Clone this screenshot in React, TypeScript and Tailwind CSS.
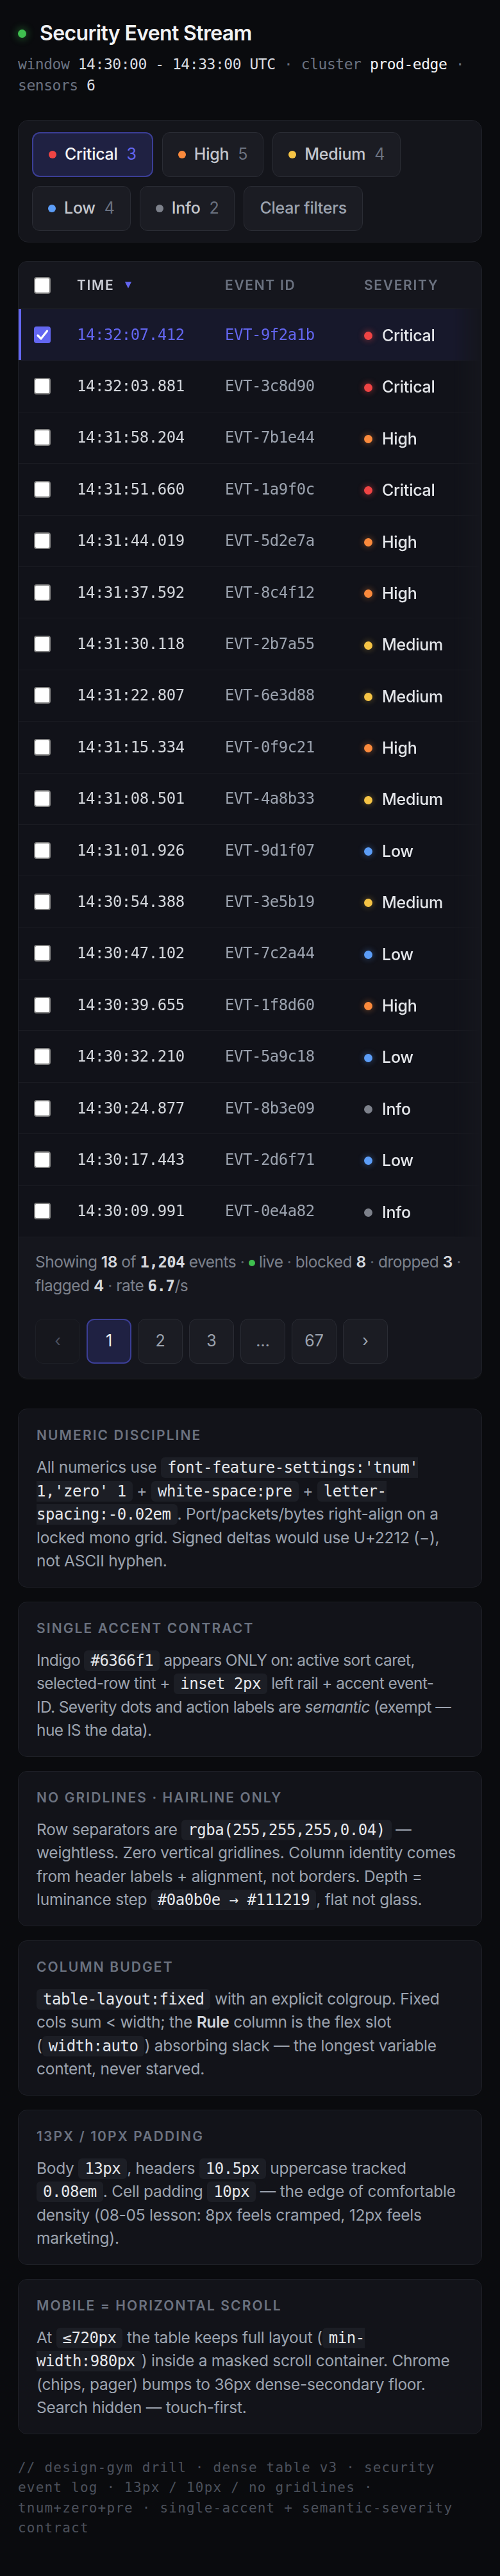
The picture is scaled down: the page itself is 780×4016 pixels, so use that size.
import React from "react";

type Sev = "Critical" | "High" | "Medium" | "Low" | "Info";

const MONO = "[font-family:'DejaVu_Sans_Mono','Liberation_Mono',monospace]";

const DOT: Record<Sev, string> = {
  Critical: "bg-[#ef4444] shadow-[0_0_9px_2px_rgba(239,68,68,0.35)]",
  High: "bg-[#fb8a3c] shadow-[0_0_9px_2px_rgba(251,138,60,0.28)]",
  Medium: "bg-[#f6c445] shadow-[0_0_9px_2px_rgba(246,196,69,0.22)]",
  Low: "bg-[#5c9df7] shadow-[0_0_9px_2px_rgba(92,157,247,0.25)]",
  Info: "bg-[#7d818b]",
};

const CHIP_DOT: Record<Sev, string> = {
  Critical: "bg-[#ef4444]",
  High: "bg-[#fb8a3c]",
  Medium: "bg-[#f6c445]",
  Low: "bg-[#5c9df7]",
  Info: "bg-[#7d818b]",
};

const ROWS: [string, string, Sev][] = [
  ["14:32:07.412", "EVT-9f2a1b", "Critical"],
  ["14:32:03.881", "EVT-3c8d90", "Critical"],
  ["14:31:58.204", "EVT-7b1e44", "High"],
  ["14:31:51.660", "EVT-1a9f0c", "Critical"],
  ["14:31:44.019", "EVT-5d2e7a", "High"],
  ["14:31:37.592", "EVT-8c4f12", "High"],
  ["14:31:30.118", "EVT-2b7a55", "Medium"],
  ["14:31:22.807", "EVT-6e3d88", "Medium"],
  ["14:31:15.334", "EVT-0f9c21", "High"],
  ["14:31:08.501", "EVT-4a8b33", "Medium"],
  ["14:31:01.926", "EVT-9d1f07", "Low"],
  ["14:30:54.388", "EVT-3e5b19", "Medium"],
  ["14:30:47.102", "EVT-7c2a44", "Low"],
  ["14:30:39.655", "EVT-1f8d60", "High"],
  ["14:30:32.210", "EVT-5a9c18", "Low"],
  ["14:30:24.877", "EVT-8b3e09", "Info"],
  ["14:30:17.443", "EVT-2d6f71", "Low"],
  ["14:30:09.991", "EVT-0e4a82", "Info"],
];

function Box({ checked }: { checked?: boolean }) {
  if (checked) {
    return (
      <span className="flex h-[26px] w-[26px] items-center justify-center rounded-[4px] bg-[#6366f1]">
        <svg viewBox="0 0 24 24" className="h-[24px] w-[24px]">
          <path
            d="M5 13 L10 18 L19.5 6"
            fill="none"
            stroke="#ffffff"
            strokeWidth="3.2"
            strokeLinecap="round"
            strokeLinejoin="round"
          />
        </svg>
      </span>
    );
  }
  return <span className="block h-[26px] w-[26px] rounded-[4px] border-2 border-[#808080] bg-white" />;
}

function Chip({
  sev,
  label,
  count,
  active,
}: {
  sev?: Sev;
  label: string;
  count?: number;
  active?: boolean;
}) {
  return (
    <div
      className={`flex h-[70px] items-center gap-[13px] rounded-[12px] px-[24px] text-[25px] tracking-[-0.01em] ${
        active
          ? "border-2 border-[#3b3e96] bg-[#1f2142]"
          : "border border-[#2a2c34] bg-[#1b1c23]"
      }`}
    >
      {sev && <span className={`h-[12px] w-[12px] rounded-full ${CHIP_DOT[sev]}`} />}
      <span className={`font-medium ${active ? "text-[#f3f4f6]" : sev ? "text-[#c4c7ce]" : "text-[#9ca3af]"}`}>
        {label}
      </span>
      {count !== undefined && (
        <span className={`ml-[1px] ${active ? "text-[#6366f1]" : "text-[#6b7280]"}`}>{count}</span>
      )}
    </div>
  );
}

function C({ children }: { children: React.ReactNode }) {
  return (
    <code
      className={`${MONO} rounded-[6px] bg-[#1c1e25] px-[10px] py-[2px] text-[24px] leading-[1] tracking-[-0.02em] text-[#e5e7eb]`}
    >
      {children}
    </code>
  );
}

function Note({
  title,
  children,
  first,
  tight,
}: {
  title: string;
  children: React.ReactNode;
  first?: boolean;
  tight?: boolean;
}) {
  return (
    <section
      className={`${first ? "mt-[47px]" : "mt-[22px]"} rounded-[14px] border border-[#1e2027] bg-[#121319] px-[28px] pb-[22px] pt-[27px]`}
    >
      <h3 className="text-[21px] font-semibold uppercase leading-[28px] tracking-[0.1em] text-[#6b7280]">{title}</h3>
      <p
        className={`mt-[17px] text-[24.5px] leading-[36.5px] text-[#9ca3af] ${
          tight ? "tracking-[-0.6px]" : "tracking-[-0.25px]"
        }`}
      >
        {children}
      </p>
    </section>
  );
}

function PageBtn({ children, active, disabled }: { children: React.ReactNode; active?: boolean; disabled?: boolean }) {
  return (
    <div
      className={`flex h-[70px] w-[70px] items-center justify-center rounded-[12px] text-[25px] ${
        active
          ? "border-2 border-[#3b3e96] bg-[#1f2142] text-[#f3f4f6]"
          : disabled
          ? "border border-[#1d1f26] bg-[#16171d] text-[#4b5060]"
          : "border border-[#2a2c34] bg-[#1b1c23] text-[#9ca3af]"
      }`}
    >
      {children}
    </div>
  );
}

export default function App() {
  return (
    <div className="min-h-screen bg-[#0a0b0e] px-[28px] pb-[57px] pt-[32px] [font-family:Inter,'Noto_Sans',sans-serif]">
      {/* Title */}
      <div className="flex h-[40px] items-center gap-[21px]">
        <span className="h-[13px] w-[13px] shrink-0 rounded-full bg-[#3fbf4f] shadow-[0_0_12px_3px_rgba(63,191,79,0.3)]" />
        <h1 className="text-[32px] font-semibold leading-[40px] tracking-[-0.02em] text-[#f1f2f4]">
          Security Event Stream
        </h1>
      </div>
      <p className={`${MONO} mt-[12px] text-[23px] leading-[33px] tracking-[-0.02em] text-[#6b7280]`}>
        window <span className="text-[#d9dce1]">14:30:00 - 14:33:00 UTC</span> · cluster{" "}
        <span className="text-[#f3f4f6]">prod-edge</span> · sensors <span className="text-[#d9dce1]">6</span>
      </p>

      {/* Chips */}
      <div className="mt-[37px] rounded-[16px] border border-[#1f2128] bg-[#14151b] px-[21px] pb-[17px] pt-[18px]">
        <div className="flex flex-wrap gap-[14px]">
          <Chip sev="Critical" label="Critical" count={3} active />
          <Chip sev="High" label="High" count={5} />
          <Chip sev="Medium" label="Medium" count={4} />
          <Chip sev="Low" label="Low" count={4} />
          <Chip sev="Info" label="Info" count={2} />
          <Chip label="Clear filters" />
        </div>
      </div>

      {/* Table card */}
      <div className="mt-[29px] overflow-hidden rounded-[14px] border border-[#1f2128] bg-[#15161d] shadow-[0_2px_0_rgba(255,255,255,0.03)]">
        <div className="overflow-hidden [mask-image:linear-gradient(to_right,#000_calc(100%-44px),transparent)]">
          <div className="w-[1960px]">
            <div className="flex h-[74px] items-center border-b border-[#22242b] text-[21px] font-semibold uppercase tracking-[0.08em]">
              <div className="flex w-[71px] shrink-0 items-center pl-[24px]">
                <Box />
              </div>
              <div className="flex w-[231px] shrink-0 items-center gap-[17px] pl-[20px] text-[#c9ccd4]">
                <span>Time</span>
                <svg width="10" height="11" viewBox="0 0 10 11">
                  <path d="M0 0.5 H10 L5 10.5 Z" fill="#6366f1" />
                </svg>
              </div>
              <div className="w-[217px] shrink-0 pl-[20px] text-[#6b7280]">Event ID</div>
              <div className="w-[240px] shrink-0 pl-[20px] text-[#6b7280]">Severity</div>
            </div>
            <div className="bg-[#111219]">
              {ROWS.map(([t, id, sev], i) => {
                const sel = i === 0;
                return (
                  <div
                    key={id}
                    className={`flex h-[80.4px] items-center border-b border-white/[0.04] ${
                      sel ? "bg-[#17182b] shadow-[inset_4px_0_0_#6366f1]" : ""
                    }`}
                  >
                    <div className="flex w-[71px] shrink-0 items-center pl-[24px]">
                      <Box checked={sel} />
                    </div>
                    <div
                      className={`${MONO} w-[231px] shrink-0 whitespace-pre pl-[20px] text-[24px] tracking-[-0.02em] ${
                        sel ? "text-[#6366f1]" : "text-[#d4d7dc]"
                      }`}
                    >
                      {t}
                    </div>
                    <div
                      className={`${MONO} w-[217px] shrink-0 whitespace-pre pl-[20px] text-[24px] tracking-[-0.02em] ${
                        sel ? "text-[#6366f1]" : "text-[#9ca3af]"
                      }`}
                    >
                      {id}
                    </div>
                    <div className="flex w-[240px] shrink-0 items-center gap-[15px] pl-[20px] pt-[4px]">
                      <span className={`h-[13px] w-[13px] shrink-0 rounded-full ${DOT[sev]}`} />
                      <span className="text-[25px] font-medium tracking-[-0.01em] text-[#e4e6ea]">{sev}</span>
                    </div>
                  </div>
                );
              })}
            </div>
          </div>
        </div>

        <div className="px-[26px] pb-[22px] pt-[20px]">
          <p className="text-[24.5px] leading-[36px] tracking-[-0.5px] text-[#7c818c]">
            Showing <span className="font-semibold text-[#d4d7dc]">18</span> of{" "}
            <span className={`${MONO} text-[24px] font-semibold tracking-[-0.02em] text-[#d4d7dc]`}>1,204</span> events
            <span className="text-[#5b606b]"> · </span>
            <span className="inline-block h-[10px] w-[10px] rounded-full bg-[#3fbf4f] align-middle" /> live
            <span className="text-[#5b606b]"> · </span>blocked <span className="font-semibold text-[#d4d7dc]">8</span>
            <span className="text-[#5b606b]"> · </span>dropped <span className="font-semibold text-[#d4d7dc]">3</span>
            <span className="text-[#5b606b]"> · </span>flagged <span className="font-semibold text-[#d4d7dc]">4</span>
            <span className="text-[#5b606b]"> · </span>rate{" "}
            <span className={`${MONO} text-[24px] font-semibold tracking-[-0.02em] text-[#d4d7dc]`}>6.7</span>/s
          </p>
          <div className="mt-[33px] flex gap-[10px]">
            <PageBtn disabled>‹</PageBtn>
            <PageBtn active>1</PageBtn>
            <PageBtn>2</PageBtn>
            <PageBtn>3</PageBtn>
            <PageBtn>…</PageBtn>
            <PageBtn>67</PageBtn>
            <PageBtn>›</PageBtn>
          </div>
        </div>
      </div>

      {/* Notes */}
      <Note title="Numeric discipline" first>
        All numerics use <C>font-feature-settings:'tnum' 1,'zero' 1</C> + <C>white-space:pre</C> +{" "}
        <C>letter-spacing:-0.02em</C>. Port/packets/bytes right-align on a locked mono grid. Signed deltas would use
        U+2212 (−), not ASCII hyphen.
      </Note>
      <Note title="Single accent contract" tight>
        Indigo <C>#6366f1</C> appears ONLY on: active sort caret, selected-row tint + <C>inset 2px</C> left rail +
        accent event-
        <br />
        ID. Severity dots and action labels are <em>semantic</em> (exempt — hue IS the data).
      </Note>
      <Note title="No gridlines · hairline only">
        Row separators are <C>rgba(255,255,255,0.04)</C> — weightless. Zero vertical gridlines. Column identity comes
        from header labels + alignment, not borders. Depth = luminance step <C>#0a0b0e → #111219</C>, flat not glass.
      </Note>
      <Note title="Column budget">
        <C>table-layout:fixed</C> with an explicit colgroup. Fixed cols sum &lt; width; the{" "}
        <b className="font-semibold text-[#d1d5db]">Rule</b> column is the flex slot (<C>width:auto</C>) absorbing
        slack — the longest variable content, never starved.
      </Note>
      <Note title="13px / 10px padding">
        Body <C>13px</C>, headers <C>10.5px</C> uppercase tracked <C>0.08em</C>. Cell padding <C>10px</C> — the edge of
        comfortable density (08-05 lesson: 8px feels cramped, 12px feels marketing).
      </Note>
      <Note title="Mobile = horizontal scroll">
        At <C>≤720px</C> the table keeps full layout (<C>min-width:980px</C>) inside a masked scroll container. Chrome
        (chips, pager) bumps to 36px dense-secondary floor. Search hidden — touch-first.
      </Note>

      <p className={`${MONO} mt-[37px] text-[21px] leading-[31.5px] tracking-[1.2px] text-[#4b505b]`}>
        // design-gym drill · dense table v3 · security event log · 13px / 10px / no gridlines · tnum+zero+pre ·
        single-accent + semantic-severity contract
      </p>
    </div>
  );
}
